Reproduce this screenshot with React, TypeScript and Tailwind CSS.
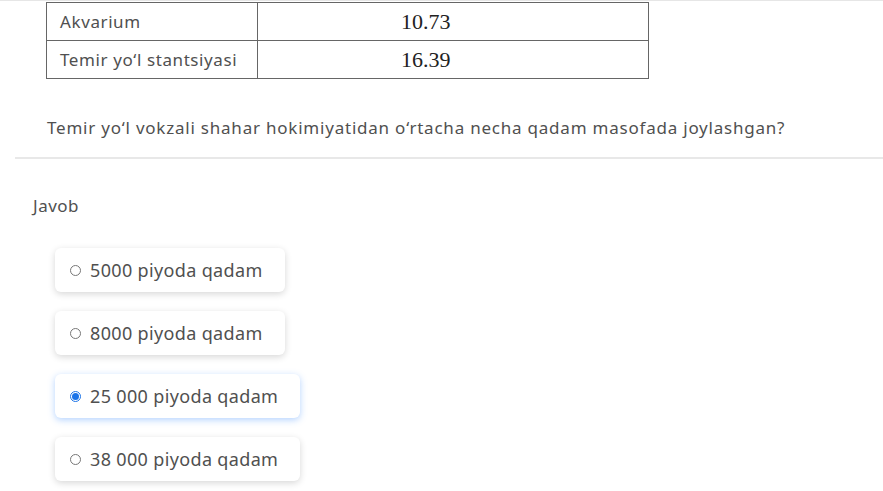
import React from "react";

const font = { fontFamily: '"Noto Sans", "Open Sans", sans-serif' };
const serif = { fontFamily: '"Liberation Serif", "DejaVu Serif", serif' };

function Option({ label, checked }: { label: string; checked?: boolean }) {
  return (
    <div
      className={
        "flex items-center h-[44px] pl-[15px] pr-[22px] rounded-md bg-white " +
        (checked
          ? "shadow-[0_2px_7px_rgba(40,130,255,0.35)]"
          : "shadow-[0_2px_7px_rgba(0,0,0,0.16)]")
      }
    >
      {checked ? (
        <span className="w-[11px] h-[11px] rounded-full border border-[#1a73e8] flex items-center justify-center">
          <span className="w-[7px] h-[7px] rounded-full bg-[#1a73e8]" />
        </span>
      ) : (
        <span className="w-[11px] h-[11px] rounded-full border border-[#777]" />
      )}
      <span className="ml-[9px] text-[18px] tracking-[0.35px] text-[#505050] leading-none">{label}</span>
    </div>
  );
}

export default function App() {
  return (
    <div className="w-[883px] h-[491px] bg-white overflow-hidden relative" style={font}>
      <div className="h-[2px] border-t border-[#e6e6e6]" />
      <div className="pl-[46px]">
        <table className="border-collapse border border-[#666] text-[#505050]">
          <tbody>
            <tr className="h-[38px]">
              <td className="border border-[#666] w-[211px] pl-[13px] text-[17px] tracking-[0.6px]">Akvarium</td>
              <td className="border border-[#666] w-[391px] pl-[143px] text-[22px] text-[#222]" style={serif}>
                10.73
              </td>
            </tr>
            <tr className="h-[38px]">
              <td className="border border-[#666] pl-[13px] text-[17px] tracking-[0.6px]">Temir yo‘l stantsiyasi</td>
              <td className="border border-[#666] pl-[143px] text-[22px] text-[#222]" style={serif}>
                16.39
              </td>
            </tr>
          </tbody>
        </table>
      </div>
      <p className="pl-[47px] mt-[36px] text-[17px] tracking-[0.78px] text-[#505050]">
        Temir yo‘l vokzali shahar hokimiyatidan o‘rtacha necha qadam masofada joylashgan?
      </p>
      <div className="ml-[15px] mt-[16px] h-[2px] bg-[#e8e8e8]" />
      <p className="pl-[33px] mt-[34px] text-[17px] tracking-[0.5px] text-[#505050]">Javob</p>
      <div className="pl-[55px] mt-[30px] flex flex-col items-start gap-[19px]">
        <Option label="5000 piyoda qadam" />
        <Option label="8000 piyoda qadam" />
        <Option label="25 000 piyoda qadam" checked />
        <Option label="38 000 piyoda qadam" />
      </div>
    </div>
  );
}
